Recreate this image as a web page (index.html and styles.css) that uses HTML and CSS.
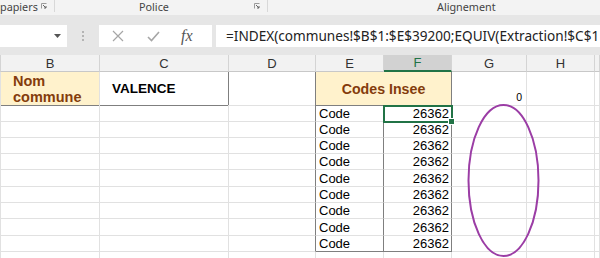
FILE: index.html
```html
<!DOCTYPE html>
<html lang="fr">
  <head>
    <meta charset="UTF-8" />
    <title>Classeur</title>
    <link rel="stylesheet" href="styles.css">
  </head>
  <body>
    <div class="ribbon">
      <div class="group g-clip">
        <span class="label">papiers</span>
        <svg class="launch" width="6" height="6" viewBox="0 0 6 6"><path d="M0.5 5.5V0.5H5.5" fill="none" stroke="#9a9a9a"/><path d="M2 2L5 5M5 3V5H3" fill="none" stroke="#666"/></svg>
      </div>
      <div class="group g-police">
        <span class="label">Police</span>
        <svg class="launch" width="6" height="6" viewBox="0 0 6 6"><path d="M0.5 5.5V0.5H5.5" fill="none" stroke="#9a9a9a"/><path d="M2 2L5 5M5 3V5H3" fill="none" stroke="#666"/></svg>
      </div>
      <div class="group g-align">
        <span class="label">Alignement</span>
      </div>
    </div>

    <div class="formula-band">
      <div class="name-box">
        <svg width="7" height="4" viewBox="0 0 7 4"><path d="M0 0H7L3.5 4Z" fill="#555"/></svg>
      </div>
      <div class="grip"><i></i><i></i><i></i></div>
      <div class="fx-box">
        <svg width="12" height="12" viewBox="0 0 12 12"><path d="M1 1L11 11M11 1L1 11" stroke="#a6a6a6" stroke-width="1.2"/></svg>
        <svg width="13" height="11" viewBox="0 0 13 11"><path d="M1 6L4.5 9.5L12 1" fill="none" stroke="#a6a6a6" stroke-width="1.6"/></svg>
        <span class="fx">fx</span>
      </div>
      <div class="formula">=INDEX(communes!$B$1:$E$39200;EQUIV(Extraction!$C$1</div>
    </div>

    <div class="sheet">
      <div class="row head">
        <div class="c"></div>
        <div class="c">B</div>
        <div class="c">C</div>
        <div class="c">D</div>
        <div class="c">E</div>
        <div class="c active">F</div>
        <div class="c">G</div>
        <div class="c">H</div>
        <div class="c"></div>
      </div>
      <div class="row r1">
        <div class="c"></div>
        <div class="c title-cell nom">Nom<br>commune</div>
        <div class="c value-cell">VALENCE</div>
        <div class="c box-left"></div>
        <div class="c title-cell codes">Codes Insee</div>
        <div class="c zero">0</div>
        <div class="c"></div>
        <div class="c"></div>
      </div>
      <div class="row r2"><div class="c"></div><div class="c"></div><div class="c"></div><div class="c box-left"></div><div class="c code">Code</div><div class="c num">26362</div><div class="c"></div><div class="c"></div><div class="c"></div></div>
      <div class="row r3"><div class="c"></div><div class="c"></div><div class="c"></div><div class="c box-left"></div><div class="c code">Code</div><div class="c num">26362</div><div class="c"></div><div class="c"></div><div class="c"></div></div>
      <div class="row r4"><div class="c"></div><div class="c"></div><div class="c"></div><div class="c box-left"></div><div class="c code">Code</div><div class="c num">26362</div><div class="c"></div><div class="c"></div><div class="c"></div></div>
      <div class="row r5"><div class="c"></div><div class="c"></div><div class="c"></div><div class="c box-left"></div><div class="c code">Code</div><div class="c num">26362</div><div class="c"></div><div class="c"></div><div class="c"></div></div>
      <div class="row r6"><div class="c"></div><div class="c"></div><div class="c"></div><div class="c box-left"></div><div class="c code">Code</div><div class="c num">26362</div><div class="c"></div><div class="c"></div><div class="c"></div></div>
      <div class="row r7"><div class="c"></div><div class="c"></div><div class="c"></div><div class="c box-left"></div><div class="c code">Code</div><div class="c num">26362</div><div class="c"></div><div class="c"></div><div class="c"></div></div>
      <div class="row r8"><div class="c"></div><div class="c"></div><div class="c"></div><div class="c box-left"></div><div class="c code">Code</div><div class="c num">26362</div><div class="c"></div><div class="c"></div><div class="c"></div></div>
      <div class="row r9"><div class="c"></div><div class="c"></div><div class="c"></div><div class="c box-left"></div><div class="c code">Code</div><div class="c num">26362</div><div class="c"></div><div class="c"></div><div class="c"></div></div>
      <div class="row r10 last"><div class="c"></div><div class="c"></div><div class="c"></div><div class="c box-left"></div><div class="c code">Code</div><div class="c num">26362</div><div class="c"></div><div class="c"></div><div class="c"></div></div>
      <div class="row r11"><div class="c"></div><div class="c"></div><div class="c"></div><div class="c"></div><div class="c"></div><div class="c"></div><div class="c"></div><div class="c"></div><div class="c"></div></div>

      <!-- selection and drawn shape sit over the grid -->
      <div class="selection"><span class="handle"></span></div>
      <svg class="shape" width="600" height="203" viewBox="0 0 600 203">
        <ellipse cx="503.5" cy="125.5" rx="35" ry="75.5" fill="none" stroke="#9b3da5" stroke-width="2"/>
      </svg>
    </div>
  </body>
</html>
```

FILE: styles.css
```css
body {
  margin: 0;
  width: 600px;
  height: 258px;
  overflow: hidden;
  background: #ffffff;
  font-family: "Liberation Sans", Arial, sans-serif;
}

/* ribbon group labels */
.ribbon {
  display: flex;
  height: 15px;
  background: #f3f3f3;
  font-family: "Noto Sans", "Open Sans", sans-serif;
  font-size: 10.8px;
  color: #444444;
  line-height: 13px;
}
.group {
  display: flex;
  align-items: flex-start;
  border-right: 1px solid #d8d8d8;
  height: 12px;
  flex: none;
}
.g-clip {
  width: 54px;
}
.g-clip .launch {
  margin: 3px 7px 0 auto;
}
.g-police {
  width: 213px;
  padding-left: 84px;
  box-sizing: border-box;
}
.g-police .launch {
  margin: 3px 7px 0 auto;
}
.g-align {
  padding-left: 169px;
  border-right: none;
}

/* formula bar */
.formula-band {
  display: flex;
  align-items: flex-start;
  height: 40px;
  padding-top: 10px;
  box-sizing: border-box;
  background: #e6e6e6;
}
.formula-band > div {
  flex: none;
}
.name-box {
  width: 67px;
  height: 22px;
  background: #ffffff;
  display: flex;
  align-items: center;
  justify-content: flex-end;
  padding-right: 6px;
  box-sizing: border-box;
}
.grip {
  width: 32px;
  height: 22px;
  display: flex;
  flex-direction: column;
  align-items: center;
  justify-content: center;
  gap: 2px;
}
.grip i {
  width: 2px;
  height: 2px;
  background: #b4b4b4;
}
.fx-box {
  width: 113px;
  height: 22px;
  background: #ffffff;
  display: flex;
  align-items: center;
  padding-left: 13px;
  gap: 23px;
  box-sizing: border-box;
}
.fx {
  font-family: "Liberation Serif", serif;
  font-style: italic;
  font-size: 16px;
  color: #555555;
  margin-left: -2px;
}
.formula-band > .formula {
  margin-left: 4px;
  flex: 1;
  min-width: 0;
  height: 22px;
  background: #ffffff;
  padding-left: 10px;
  font-family: "Noto Sans", "Open Sans", sans-serif;
  font-size: 13.6px;
  line-height: 22px;
  color: #222222;
  white-space: nowrap;
}

/* sheet grid */
.sheet {
  position: relative;
  font-size: 13px;
  color: #000000;
}
.row {
  display: grid;
  grid-template-columns: 1px 99px 129px 87px 68px 68px 75px 68px 5px;
  height: 16px;
}
.r2, .r6, .r9 { height: 17px; }
.c {
  border-right: 1px solid #e1e1e1;
  border-bottom: 1px solid #e1e1e1;
  box-sizing: border-box;
  display: flex;
  align-items: center;
  white-space: nowrap;
}
.head {
  height: 17px;
  background: #f2f2f2;
  color: #333333;
}
.head .c {
  justify-content: center;
  border-right-color: #d4d4d4;
  border-bottom-color: #c8c8c8;
}
.head .active {
  background: #d2d2d2;
  color: #217346;
  border-bottom: 2px solid #217346;
}

.r1 {
  height: 33px;
  grid-template-columns: 1px 99px 129px 87px 136px 75px 68px 5px;
}
.title-cell {
  background: #fff2cc;
  font-weight: bold;
  color: #843c0c;
}
.nom {
  padding: 1px 0 0 12px;
  line-height: 16px;
  font-size: 14.5px;
  border-bottom-color: #7f7f7f;
}
.value-cell {
  padding-left: 12px;
  font-weight: bold;
  font-size: 13.5px;
  border-right-color: #7f7f7f;
  border-bottom-color: #7f7f7f;
}
.box-left {
  border-right-color: #7f7f7f;
}
.codes {
  justify-content: center;
  font-size: 14.2px;
  border-right-color: #7f7f7f;
  border-bottom-color: #7f7f7f;
}
.zero {
  justify-content: flex-end;
  align-items: flex-end;
  padding: 0 4px 2px 0;
  font-size: 10.5px;
}
.code {
  padding-left: 3px;
  border-right-color: #7f7f7f;
}
.num {
  justify-content: flex-end;
  padding-right: 2px;
  border-right-color: #7f7f7f;
}
.last .code,
.last .num {
  border-bottom-color: #7f7f7f;
}

.selection {
  position: absolute;
  left: 383px;
  top: 50px;
  width: 70px;
  height: 18px;
  border: 2px solid #217346;
  box-sizing: border-box;
}
.handle {
  position: absolute;
  right: -4px;
  bottom: -4px;
  width: 5px;
  height: 5px;
  background: #217346;
  border: 1px solid #ffffff;
}
.shape {
  position: absolute;
  left: 0;
  top: 0;
  pointer-events: none;
}
```
